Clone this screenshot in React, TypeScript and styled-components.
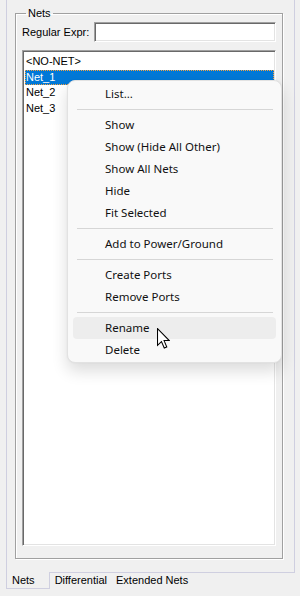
import React from "react";
import styled, { createGlobalStyle } from "styled-components";

const GlobalStyle = createGlobalStyle`
  html, body {
    margin: 0;
    padding: 0;
    background: #f0f0f0;
  }
  body {
    font-family: "Liberation Sans", Arial, sans-serif;
    font-size: 11px;
    color: #000;
  }
`;

const Window = styled.div`
  position: relative;
  width: 300px;
  height: 596px;
  overflow: hidden;
  background: #f0f0f0;
`;

const TabPane = styled.div`
  margin-left: 6px;
  width: 289px;
  height: 572px;
  box-sizing: border-box;
  border-left: 1px solid #cfcfe0;
  border-right: 1px solid #cfcfe0;
  padding: 0 11px 0 8px;
  display: flex;
  flex-direction: column;
`;

const Group = styled.fieldset`
  margin: 7px 0 0 0;
  padding: 2px 6px 12px 6px;
  border: 1px solid #a0a0a0;
  box-shadow: inset 1px 1px 0 #fff, 1px 1px 0 #fff;
  display: flex;
  flex-direction: column;
  min-width: 0;
`;

const Legend = styled.legend`
  margin-left: 4px;
  padding: 0 2px;
  line-height: 13px;
  font-size: 11px;
`;

const ExprRow = styled.div`
  display: flex;
  align-items: center;
  height: 20px;
`;

const ExprLabel = styled.label`
  width: 72px;
  flex: none;
`;

const Sunken = styled.div`
  box-sizing: border-box;
  background: #fff;
  border-top: 1px solid #a0a0a0;
  border-left: 1px solid #a0a0a0;
  border-right: 1px solid #fff;
  border-bottom: 1px solid #fff;
  box-shadow: inset 1px 1px 0 #696969, inset -1px -1px 0 #e3e3e3;
`;

const ExprInput = styled(Sunken)`
  flex: 1;
  height: 20px;
`;

const NetList = styled(Sunken)`
  margin-top: 8px;
  height: 496px;
  padding: 3px 1px 0 2px;
`;

const NetRow = styled.div<{ $selected?: boolean }>`
  height: 15.5px;
  line-height: 15.5px;
  padding-left: 1px;
  box-sizing: border-box;
  background: ${(p) => (p.$selected ? "#0078d7" : "transparent")};
  color: ${(p) => (p.$selected ? "#fff" : "#000")};
  outline: ${(p) => (p.$selected ? "1px dotted #f7a341" : "none")};
  outline-offset: -1px;
`;

const TabStrip = styled.div`
  margin-left: 6px;
  width: 289px;
  display: flex;
  height: 17px;
`;

const Tab = styled.div<{ $active?: boolean; $pad: string }>`
  box-sizing: border-box;
  height: ${(p) => (p.$active ? "17px" : "16px")};
  padding: ${(p) => p.$pad};
  line-height: 15px;
  white-space: nowrap;
  border-top: ${(p) => (p.$active ? "none" : "1px solid #cfcfe0")};
  border-left: ${(p) => (p.$active ? "1px solid #cfcfe0" : "none")};
  border-right: ${(p) => (p.$active ? "1px solid #cfcfe0" : "none")};
  border-bottom: ${(p) => (p.$active ? "1px solid #cfcfe0" : "none")};
  padding-top: ${(p) => (p.$active ? "1px" : "0")};
`;

const TabFill = styled.div`
  flex: 1;
  height: 1px;
  background: #cfcfe0;
`;

const Menu = styled.div`
  position: absolute;
  left: 67px;
  top: 80px;
  width: 215px;
  box-sizing: border-box;
  padding: 2px 5px 1px 5px;
  background: #f9f9f9;
  border: 1px solid #e2e2e2;
  border-radius: 8px;
  box-shadow: 0 8px 16px rgba(0, 0, 0, 0.14), 0 0 2px rgba(0, 0, 0, 0.06);
  font-family: "Noto Sans", "Open Sans", sans-serif;
  font-size: 11.5px;
  color: #111;
`;

const MenuItem = styled.div<{ $hover?: boolean }>`
  height: 22px;
  line-height: 22px;
  padding-left: 32px;
  border-radius: 4px;
  background: ${(p) => (p.$hover ? "#ededed" : "transparent")};
`;

const Separator = styled.div`
  height: 1px;
  margin: 4px 3px 4px 4px;
  background: #d6d6d6;
`;

const Cursor = styled.svg`
  position: absolute;
  left: 157px;
  top: 328px;
`;

const nets = ["<NO-NET>", "Net_1", "Net_2", "Net_3"];

const tabs = [
  { label: "Nets", active: true, pad: "0 14px 0 5px" },
  { label: "Differential", pad: "0 4px 0 5px" },
  { label: "Extended Nets", pad: "0 6px 0 5px" },
];

type Entry = { label: string; hover?: boolean } | "sep";

const menu: Entry[] = [
  { label: "List..." },
  "sep",
  { label: "Show" },
  { label: "Show (Hide All Other)" },
  { label: "Show All Nets" },
  { label: "Hide" },
  { label: "Fit Selected" },
  "sep",
  { label: "Add to Power/Ground" },
  "sep",
  { label: "Create Ports" },
  { label: "Remove Ports" },
  "sep",
  { label: "Rename", hover: true },
  { label: "Delete" },
];

export default function App() {
  return (
    <Window>
      <GlobalStyle />
      <TabPane>
        <Group>
          <Legend>Nets</Legend>
          <ExprRow>
            <ExprLabel>Regular Expr:</ExprLabel>
            <ExprInput />
          </ExprRow>
          <NetList>
            {nets.map((n) => (
              <NetRow key={n} $selected={n === "Net_1"}>
                {n}
              </NetRow>
            ))}
          </NetList>
        </Group>
      </TabPane>
      <TabStrip>
        {tabs.map((t) => (
          <Tab key={t.label} $active={t.active} $pad={t.pad}>
            {t.label}
          </Tab>
        ))}
        <TabFill />
      </TabStrip>

      <Menu>
        {menu.map((m, i) =>
          m === "sep" ? (
            <Separator key={i} />
          ) : (
            <MenuItem key={i} $hover={m.hover}>
              {m.label}
            </MenuItem>
          )
        )}
      </Menu>

      <Cursor width="13" height="21" viewBox="0 0 12.5 20">
        <path
          d="M0.5 0.5 L0.5 16.5 L4.3 12.9 L7 19.2 L9.4 18.2 L6.8 12 L11.8 12 Z"
          fill="#fff"
          stroke="#000"
          strokeWidth="1"
          strokeLinejoin="miter"
        />
      </Cursor>
    </Window>
  );
}
